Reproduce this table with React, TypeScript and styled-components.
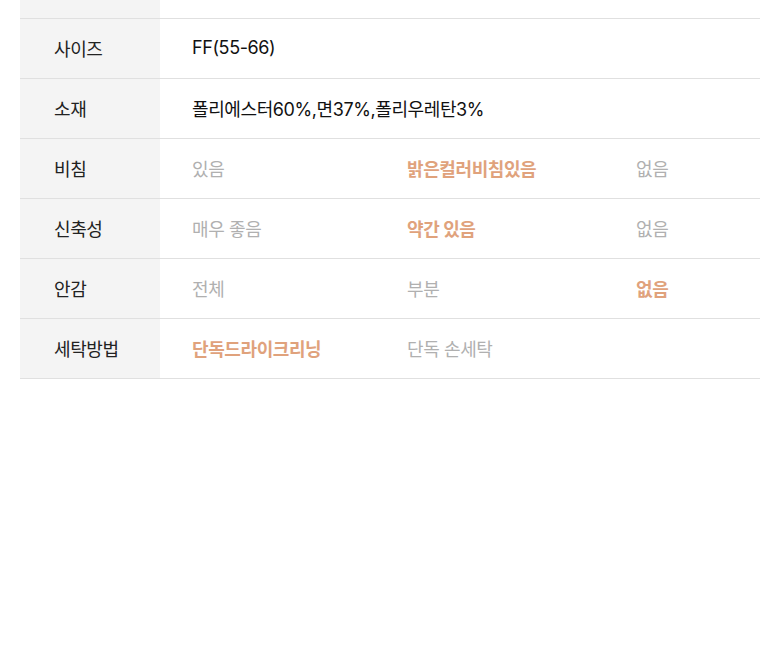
import React from 'react';
import styled, { createGlobalStyle } from 'styled-components';

const GlobalStyle = createGlobalStyle`
    html, body {
        margin: 0;
        padding: 0;
        background: #fff;
    }
    body {
        font-family: Inter, 'Noto Sans CJK KR', 'Noto Sans', sans-serif;
        overflow: hidden;
    }
`;

const Page = styled.div`
    width: 780px;
    height: 672px;
    overflow: hidden;
    padding: 0 20px;
    box-sizing: border-box;
`;

const Table = styled.div`
    margin-top: -41px;
    display: flex;
    flex-direction: column;
`;

const Row = styled.div`
    display: flex;
    height: 60px;
    border-bottom: 1px solid #e0e0e0;
    box-sizing: border-box;
`;

const Label = styled.div`
    width: 140px;
    flex-shrink: 0;
    background: #f4f4f4;
    display: flex;
    align-items: center;
    padding: 0 0 2px 34px;
    box-sizing: border-box;
    font-size: 18px;
    letter-spacing: -0.4px;
    color: #222;
`;

const Values = styled.div`
    flex: 1;
    display: grid;
    grid-template-columns: 215px 229px 1fr;
    align-items: center;
    padding: 0 0 2px 32px;
`;

const Value = styled.span<{ $tone?: 'plain' | 'off' | 'on' }>`
    font-size: 18px;
    letter-spacing: -0.4px;
    white-space: nowrap;
    color: ${p => (p.$tone === 'on' ? '#e0a27c' : p.$tone === 'off' ? '#b0b0b0' : '#111')};
    font-weight: ${p => (p.$tone === 'on' ? 700 : 400)};
`;

type Item = { text: string; on?: boolean };
type Spec = { label: string; plain?: string; options?: Item[] };

const specs: Spec[] = [
    { label: '', plain: '' },
    { label: '사이즈', plain: 'FF(55-66)' },
    { label: '소재', plain: '폴리에스터60%,면37%,폴리우레탄3%' },
    {
        label: '비침',
        options: [{ text: '있음' }, { text: '밝은컬러비침있음', on: true }, { text: '없음' }],
    },
    {
        label: '신축성',
        options: [{ text: '매우 좋음' }, { text: '약간 있음', on: true }, { text: '없음' }],
    },
    {
        label: '안감',
        options: [{ text: '전체' }, { text: '부분' }, { text: '없음', on: true }],
    },
    {
        label: '세탁방법',
        options: [{ text: '단독드라이크리닝', on: true }, { text: '단독 손세탁' }],
    },
];

const App: React.FC = () => {
    return (
        <>
            <GlobalStyle />
            <Page>
                <Table>
                    {specs.map((spec, i) => (
                        <Row key={i}>
                            <Label>{spec.label}</Label>
                            <Values>
                                {spec.options ? (
                                    spec.options.map(o => (
                                        <Value key={o.text} $tone={o.on ? 'on' : 'off'}>
                                            {o.text}
                                        </Value>
                                    ))
                                ) : (
                                    <Value $tone="plain">{spec.plain}</Value>
                                )}
                            </Values>
                        </Row>
                    ))}
                </Table>
            </Page>
        </>
    );
};

export default App;
